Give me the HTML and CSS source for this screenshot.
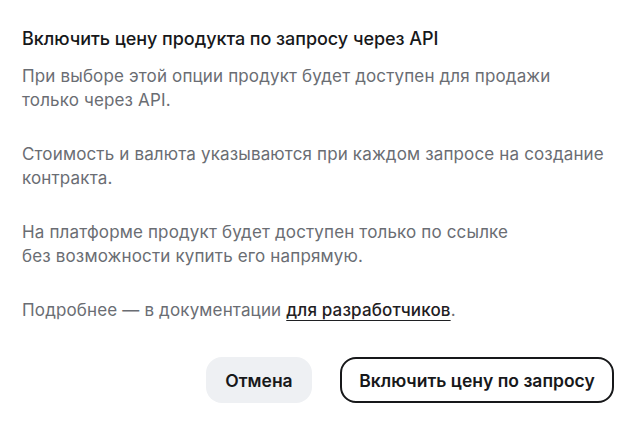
FILE: index.html
```html
<!DOCTYPE html>
<html lang="ru">
<head>
<meta charset="utf-8">
<link rel="stylesheet" href="styles.css">
</head>
<body>
<div class="dialog">
  <h1 class="title">Включить цену продукта по запросу через API</h1>
  <div class="content">
    <p class="para">При выборе этой опции продукт будет доступен для продажи<br>только через API.</p>
    <p class="para">Стоимость и валюта указываются при каждом запросе на создание<br>контракта.</p>
    <p class="para">На платформе продукт будет доступен только по ссылке<br>без возможности купить его напрямую.</p>
    <p class="para">Подробнее — в документации <a class="link" href="#">для разработчиков</a>.</p>
  </div>
  <div class="actions">
    <button class="btn btn-secondary">Отмена</button>
    <button class="btn btn-outline">Включить цену по запросу</button>
  </div>
</div>
</body>
</html>
```

FILE: styles.css
```css
html, body {
  margin: 0;
  padding: 0;
  background: #ffffff;
}
body {
  font-family: Inter, "Liberation Sans", sans-serif;
}
.dialog {
  width: 640px;
  box-sizing: border-box;
  padding: 27px 20px 0 22px;
  display: flex;
  flex-direction: column;
}
.title {
  margin: 0;
  font-size: 18px;
  line-height: 24px;
  font-weight: 500;
  letter-spacing: -0.05px;
  color: #17181a;
}
.content {
  margin-top: 13px;
  display: flex;
  flex-direction: column;
  gap: 30px;
}
.para {
  margin: 0;
  font-size: 17px;
  line-height: 24px;
  letter-spacing: 0.15px;
  color: #6a6d73;
}
.link {
  color: #1f2023;
  font-weight: 500;
  text-decoration: underline;
  text-underline-offset: 4px;
  text-decoration-thickness: 1px;
}
.actions {
  margin-top: 35px;
  display: flex;
  justify-content: flex-end;
  gap: 28px;
  padding-right: 6px;
}
.btn {
  font-family: Inter, "Liberation Sans", sans-serif;
  font-size: 17.5px;
  font-weight: 600;
  height: 46px;
  border-radius: 16px;
  padding: 0;
  cursor: pointer;
  color: #17181a;
}
.btn-secondary {
  background: #eef0f3;
  border: none;
  width: 106px;
}
.btn-outline {
  background: #ffffff;
  border: 2px solid #17181a;
  width: 274px;
}
```
